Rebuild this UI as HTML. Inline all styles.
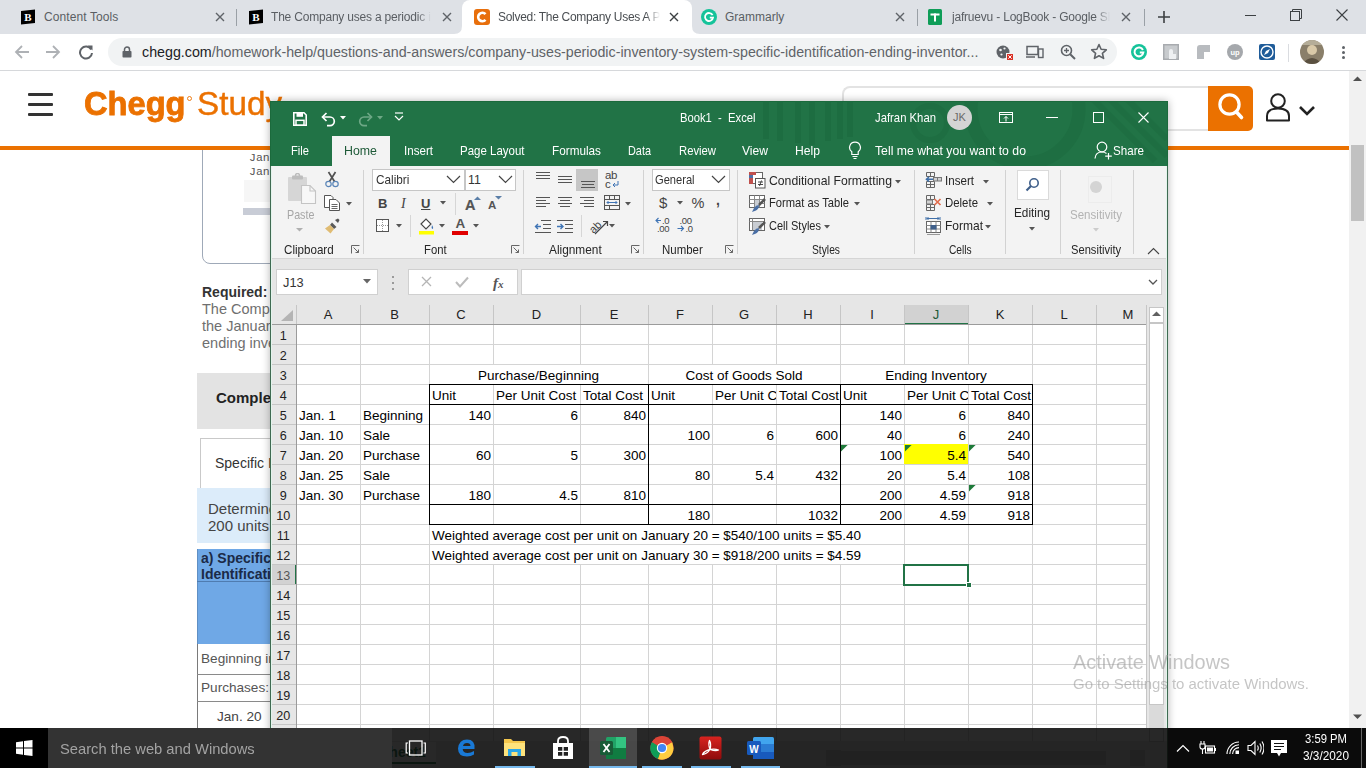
<!DOCTYPE html><html><head><meta charset="utf-8"><style>
html,body{margin:0;padding:0}
body{width:1366px;height:768px;overflow:hidden;position:relative;font-family:"Liberation Sans",sans-serif;background:#fff}
div,svg{box-sizing:border-box}
</style></head><body>
<div style="position:absolute;left:0px;top:0px;width:1366px;height:34px;background:#dee1e6"></div>
<div style="position:absolute;left:462px;top:0;width:230px;height:34px;background:#fff;border-radius:8px 8px 0 0"></div>
<svg style="position:absolute;left:454px;top:26px;" width="8" height="8" viewBox="0 0 8 8"><path d="M0 8 Q8 8 8 0 L8 8 Z" fill="#fff"/></svg>
<svg style="position:absolute;left:692px;top:26px;" width="8" height="8" viewBox="0 0 8 8"><path d="M8 8 Q0 8 0 0 L0 8 Z" fill="#fff"/></svg>
<div style="position:absolute;left:236px;top:9px;width:1px;height:17px;background:#9aa0a6"></div>
<div style="position:absolute;left:917px;top:9px;width:1px;height:17px;background:#9aa0a6"></div>
<div style="position:absolute;left:1144px;top:9px;width:1px;height:17px;background:#9aa0a6"></div>
<svg style="position:absolute;left:20px;top:9px;" width="16" height="16" viewBox="0 0 16 16"><path d="M1 2 L15 0.5 L15 14 L1 15.5 Z" fill="#000"/><text x="8" y="12.3" font-family="Liberation Serif" font-weight="bold" font-size="11" fill="#fff" text-anchor="middle">B</text></svg>
<div style="position:absolute;left:44px;top:9.0px;height:16px;line-height:16px;font-size:12px;color:#5a5e63;white-space:nowrap;letter-spacing:0.1px">Content Tools</div>
<svg style="position:absolute;left:215px;top:12px;" width="10" height="10" viewBox="0 0 10 10"><path d="M1 1 L9 9 M9 1 L1 9" stroke="#5f6368" stroke-width="1.4"/></svg>
<svg style="position:absolute;left:248px;top:9px;" width="16" height="16" viewBox="0 0 16 16"><path d="M1 2 L15 0.5 L15 14 L1 15.5 Z" fill="#000"/><text x="8" y="12.3" font-family="Liberation Serif" font-weight="bold" font-size="11" fill="#fff" text-anchor="middle">B</text></svg>
<div style="position:absolute;left:271px;top:9px;width:160px;height:16px;line-height:16px;font-size:12px;color:#5a5e63;letter-spacing:-0.2px;white-space:nowrap;overflow:hidden;-webkit-mask-image:linear-gradient(90deg,#000 calc(100% - 14px),transparent)">The Company uses a periodic inventory</div>
<svg style="position:absolute;left:442px;top:12px;" width="10" height="10" viewBox="0 0 10 10"><path d="M1 1 L9 9 M9 1 L1 9" stroke="#5f6368" stroke-width="1.4"/></svg>
<svg style="position:absolute;left:474px;top:9px;" width="16" height="16" viewBox="0 0 16 16"><rect x="0" y="0" width="16" height="16" rx="3" fill="#e86f0c"/><path d="M11.5 5.2 A4.2 4.2 0 1 0 11.5 10.8" stroke="#fff" stroke-width="2.6" fill="none"/></svg>
<div style="position:absolute;left:498px;top:9px;width:162px;height:16px;line-height:16px;font-size:12px;color:#4a4e52;letter-spacing:-0.3px;white-space:nowrap;overflow:hidden;-webkit-mask-image:linear-gradient(90deg,#000 calc(100% - 14px),transparent)">Solved: The Company Uses A Periodic</div>
<svg style="position:absolute;left:669px;top:12px;" width="10" height="10" viewBox="0 0 10 10"><path d="M1 1 L9 9 M9 1 L1 9" stroke="#3c4043" stroke-width="1.4"/></svg>
<svg style="position:absolute;left:701px;top:9px;" width="16" height="16" viewBox="0 0 16 16"><circle cx="8" cy="8" r="8" fill="#15c39a"/><path d="M11.6 6.2 A4 4 0 1 0 12 8.6 L8.8 8.6" stroke="#fff" stroke-width="1.8" fill="none"/></svg>
<div style="position:absolute;left:725px;top:9.0px;height:16px;line-height:16px;font-size:12px;color:#5a5e63;white-space:nowrap;">Grammarly</div>
<svg style="position:absolute;left:895px;top:12px;" width="10" height="10" viewBox="0 0 10 10"><path d="M1 1 L9 9 M9 1 L1 9" stroke="#5f6368" stroke-width="1.4"/></svg>
<svg style="position:absolute;left:927px;top:9px;" width="16" height="16" viewBox="0 0 16 16"><rect x="1" y="0" width="14" height="16" rx="1.5" fill="#0f9d58"/><rect x="3.5" y="4.5" width="9" height="2" fill="#fff"/><rect x="7" y="4.5" width="2" height="8" fill="#fff"/></svg>
<div style="position:absolute;left:952px;top:9px;width:158px;height:16px;line-height:16px;font-size:12px;color:#5a5e63;letter-spacing:-0.2px;white-space:nowrap;overflow:hidden;-webkit-mask-image:linear-gradient(90deg,#000 calc(100% - 14px),transparent)">jafruevu - LogBook - Google Sheets</div>
<svg style="position:absolute;left:1121px;top:12px;" width="10" height="10" viewBox="0 0 10 10"><path d="M1 1 L9 9 M9 1 L1 9" stroke="#5f6368" stroke-width="1.4"/></svg>
<svg style="position:absolute;left:1157px;top:10px;" width="14" height="14" viewBox="0 0 14 14"><path d="M7 1 V13 M1 7 H13" stroke="#3c4043" stroke-width="1.6"/></svg>
<div style="position:absolute;left:1245px;top:15px;width:11px;height:1px;background:#3c4043"></div>
<svg style="position:absolute;left:1290px;top:9px;" width="12" height="12" viewBox="0 0 12 12"><rect x="0.5" y="2.5" width="9" height="9" fill="none" stroke="#3c4043"/><path d="M2.5 2.5 V0.5 H11.5 V9.5 H9.5" fill="none" stroke="#3c4043"/></svg>
<svg style="position:absolute;left:1336px;top:9px;" width="12" height="12" viewBox="0 0 12 12"><path d="M0.5 0.5 L11.5 11.5 M11.5 0.5 L0.5 11.5" stroke="#3c4043" stroke-width="1.1"/></svg>
<div style="position:absolute;left:0px;top:34px;width:1366px;height:36px;background:#fff"></div>
<div style="position:absolute;left:0px;top:70px;width:1366px;height:1px;background:#d6d8db"></div>
<svg style="position:absolute;left:14px;top:44px;" width="16" height="16" viewBox="0 0 16 16"><path d="M15 8 H2 M8 2 L2 8 L8 14" stroke="#aeb1b5" stroke-width="1.8" fill="none"/></svg>
<svg style="position:absolute;left:45px;top:44px;" width="16" height="16" viewBox="0 0 16 16"><path d="M1 8 H14 M8 2 L14 8 L8 14" stroke="#aeb1b5" stroke-width="1.8" fill="none"/></svg>
<svg style="position:absolute;left:78px;top:44px;" width="16" height="16" viewBox="0 0 16 16"><path d="M13.2 5.5 A6 6 0 1 0 14 9" stroke="#5f6368" stroke-width="2" fill="none"/><path d="M9.5 1.5 L14.5 1.5 L14.5 6.5 Z" fill="#5f6368"/></svg>
<div style="position:absolute;left:108px;top:38px;width:1009px;height:28px;background:#f1f3f4;border-radius:14px"></div>
<svg style="position:absolute;left:121.5px;top:46px;" width="10" height="12" viewBox="0 0 10 12"><rect x="0.5" y="5" width="9" height="6.5" rx="0.8" fill="#5f6368"/><path d="M2.5 5.5 V3.6 A2.5 2.5 0 0 1 7.5 3.6 V5.5" stroke="#5f6368" stroke-width="1.5" fill="none"/></svg>
<div style="position:absolute;left:142px;top:42.875px;height:18.25px;line-height:18.25px;font-size:14.25px;color:#5f6368;white-space:nowrap;"><span style="color:#202124">chegg.com</span><span style="color:#5f6368">/homework-help/questions-and-answers/company-uses-periodic-inventory-system-specific-identification-ending-inventor...</span></div>
<svg style="position:absolute;left:996px;top:44px;" width="18" height="16" viewBox="0 0 18 16"><circle cx="7" cy="8" r="6.5" fill="#5f6368"/><circle cx="4.5" cy="6" r="1.3" fill="#f1f3f4"/><circle cx="8.5" cy="4.5" r="1.1" fill="#f1f3f4"/><circle cx="5.5" cy="10.5" r="1.1" fill="#f1f3f4"/><rect x="10" y="9" width="7" height="7" fill="#f1f3f4"/><rect x="11" y="10" width="6" height="6" fill="#d93025"/><path d="M12.3 11.3 L15.7 14.7 M15.7 11.3 L12.3 14.7" stroke="#fff" stroke-width="1"/></svg>
<svg style="position:absolute;left:1026px;top:45px;" width="18" height="14" viewBox="0 0 18 14"><rect x="1" y="1.5" width="11" height="8" fill="none" stroke="#5f6368" stroke-width="1.5"/><path d="M0 12 H9" stroke="#5f6368" stroke-width="1.5"/><rect x="12.5" y="4" width="4.5" height="8.5" fill="none" stroke="#5f6368" stroke-width="1.4"/></svg>
<svg style="position:absolute;left:1060px;top:44px;" width="16" height="16" viewBox="0 0 16 16"><circle cx="6.5" cy="6.5" r="5" fill="none" stroke="#5f6368" stroke-width="1.6"/><path d="M10.2 10.2 L15 15" stroke="#5f6368" stroke-width="2"/><path d="M6.5 4 V9 M4 6.5 H9" stroke="#5f6368" stroke-width="1.3"/></svg>
<svg style="position:absolute;left:1090px;top:43px;" width="18" height="17" viewBox="0 0 18 17"><path d="M9 1.5 L11.1 6.3 L16.3 6.8 L12.4 10.3 L13.6 15.4 L9 12.7 L4.4 15.4 L5.6 10.3 L1.7 6.8 L6.9 6.3 Z" fill="none" stroke="#5f6368" stroke-width="1.6" stroke-linejoin="round"/></svg>
<svg style="position:absolute;left:1130px;top:43px;" width="18" height="18" viewBox="0 0 18 18"><circle cx="9" cy="9" r="8" fill="#15c39a"/><path d="M12.9 7 A4.4 4.4 0 1 0 13.3 9.6 L9.8 9.6" stroke="#fff" stroke-width="2" fill="none"/></svg>
<svg style="position:absolute;left:1162px;top:43px;" width="18" height="18" viewBox="0 0 18 18"><rect x="1" y="1" width="16" height="16" fill="#a8abaf"/><rect x="2.5" y="2.5" width="13" height="13" fill="#c8cbce"/><path d="M7 16 V8 Q7 6 9 6 Q11 6 11 8 V11 H14 V16 Z" fill="#eef0f2"/></svg>
<svg style="position:absolute;left:1195px;top:44px;" width="17" height="17" viewBox="0 0 17 17"><path d="M2 4 Q2 1 5 1 H15 V8 H9 V15 H2 Z" fill="#b8bbbf"/></svg>
<svg style="position:absolute;left:1226px;top:43px;" width="18" height="18" viewBox="0 0 18 18"><circle cx="9" cy="9" r="8" fill="#a5a8ac"/><text x="9" y="12" font-size="7.5" font-weight="bold" fill="#fff" text-anchor="middle" font-family="Liberation Sans">up</text></svg>
<svg style="position:absolute;left:1258px;top:43px;" width="18" height="18" viewBox="0 0 18 18"><rect x="1" y="1" width="16" height="16" rx="2" fill="#1f5c99"/><circle cx="9" cy="9" r="6" fill="none" stroke="#fff" stroke-width="1.4"/><path d="M12 6 L10 10 L6 12 L8 8 Z" fill="#fff"/></svg>
<div style="position:absolute;left:1288px;top:44px;width:1px;height:18px;background:#dadce0"></div>
<svg style="position:absolute;left:1300px;top:40px;" width="24" height="24" viewBox="0 0 24 24"><defs><clipPath id="pc"><circle cx="12" cy="12" r="12"/></clipPath></defs><g clip-path="url(#pc)"><rect width="24" height="24" fill="#8a7f6a"/><circle cx="12" cy="10" r="5" fill="#d9c9a8"/><path d="M2 24 Q12 12 22 24 Z" fill="#5a5040"/><rect x="0" y="0" width="24" height="5" fill="#b5ad98"/></g></svg>
<div style="position:absolute;left:1342px;top:46px;width:3px;height:3px;border-radius:2px;background:#5f6368"></div>
<div style="position:absolute;left:1342px;top:51px;width:3px;height:3px;border-radius:2px;background:#5f6368"></div>
<div style="position:absolute;left:1342px;top:56px;width:3px;height:3px;border-radius:2px;background:#5f6368"></div>
<div style="position:absolute;left:0px;top:71px;width:1349px;height:657px;background:#fff"></div>
<div style="position:absolute;left:1349px;top:71px;width:17px;height:657px;background:#f1f1f1"></div>
<div style="position:absolute;left:1351px;top:145px;width:13px;height:76px;background:#c1c1c1"></div>
<svg style="position:absolute;left:1353px;top:76px;" width="9" height="6" viewBox="0 0 9 6"><path d="M0 5 L4.5 0.5 L9 5 Z" fill="#505050"/></svg>
<svg style="position:absolute;left:1353px;top:714px;" width="9" height="6" viewBox="0 0 9 6"><path d="M0 0.5 L4.5 5 L9 0.5 Z" fill="#505050"/></svg>
<div style="position:absolute;left:202px;top:120px;width:300px;height:144px;border:1px solid #9fa9b8;border-radius:8px;background:#fff"></div>
<div style="position:absolute;left:249px;top:150.25px;height:15.5px;line-height:15.5px;font-size:11.5px;color:#555;white-space:nowrap;font-family:'Liberation Mono',monospace">Jan</div>
<div style="position:absolute;left:249px;top:164.25px;height:15.5px;line-height:15.5px;font-size:11.5px;color:#555;white-space:nowrap;font-family:'Liberation Mono',monospace">Jan</div>
<div style="position:absolute;left:244px;top:180px;width:30px;height:22px;background:#f6f6f6"></div>
<div style="position:absolute;left:243px;top:208px;width:30px;height:7px;background:#c8ccd6"></div>
<div style="position:absolute;left:202px;top:283.0px;height:18px;line-height:18px;font-size:14px;color:#333;white-space:nowrap;font-weight:bold">Required:</div>
<div style="position:absolute;left:202px;top:299.75px;height:18.5px;line-height:18.5px;font-size:14.5px;color:#6f6f6f;white-space:nowrap;">The Company uses</div>
<div style="position:absolute;left:202px;top:316.75px;height:18.5px;line-height:18.5px;font-size:14.5px;color:#6f6f6f;white-space:nowrap;">the January 30</div>
<div style="position:absolute;left:202px;top:333.75px;height:18.5px;line-height:18.5px;font-size:14.5px;color:#6f6f6f;white-space:nowrap;">ending inventory</div>
<div style="position:absolute;left:197px;top:373px;width:200px;height:56px;background:#e3e3e3"></div>
<div style="position:absolute;left:216px;top:387.5px;height:19px;line-height:19px;font-size:15px;color:#222;white-space:nowrap;font-weight:bold">Complete</div>
<div style="position:absolute;left:200px;top:438px;width:200px;height:52px;border:1px solid #c9c9c9;border-bottom:none;background:#fff"></div>
<div style="position:absolute;left:215px;top:454.0px;height:18px;line-height:18px;font-size:14px;color:#333;white-space:nowrap;">Specific Identification</div>
<div style="position:absolute;left:197px;top:488px;width:200px;height:55px;background:#dcecfa"></div>
<div style="position:absolute;left:208px;top:498.5px;height:19px;line-height:19px;font-size:15px;color:#444;white-space:nowrap;">Determine</div>
<div style="position:absolute;left:208px;top:515.5px;height:19px;line-height:19px;font-size:15px;color:#444;white-space:nowrap;">200 units</div>
<div style="position:absolute;left:197px;top:549px;width:200px;height:95px;background:#6fa8e6;border-left:1px solid #5f8fc4"></div>
<div style="position:absolute;left:197px;top:581px;width:200px;height:1px;background:#4f7cb0"></div>
<div style="position:absolute;left:201px;top:549.0px;height:18px;line-height:18px;font-size:14px;color:#1b2a47;white-space:nowrap;font-weight:bold">a) Specific</div>
<div style="position:absolute;left:201px;top:565.0px;height:18px;line-height:18px;font-size:14px;color:#1b2a47;white-space:nowrap;font-weight:bold">Identification</div>
<div style="position:absolute;left:197px;top:644px;width:200px;height:100px;border-left:1px solid #7a7a7a;background:#fff"></div>
<div style="position:absolute;left:197px;top:674px;width:200px;height:1px;background:#8a8a8a"></div>
<div style="position:absolute;left:197px;top:701px;width:200px;height:1px;background:#8a8a8a"></div>
<div style="position:absolute;left:201px;top:650.2px;height:17.6px;line-height:17.6px;font-size:13.6px;color:#555;white-space:nowrap;">Beginning inventory</div>
<div style="position:absolute;left:201px;top:679.2px;height:17.6px;line-height:17.6px;font-size:13.6px;color:#555;white-space:nowrap;">Purchases:</div>
<div style="position:absolute;left:217px;top:708.2px;height:17.6px;line-height:17.6px;font-size:13.6px;color:#444;white-space:nowrap;">Jan. 20</div>
<div style="position:absolute;left:0px;top:71px;width:1349px;height:75px;background:#fff"></div>
<div style="position:absolute;left:28px;top:93px;width:25px;height:3px;background:#333;border-radius:1px"></div>
<div style="position:absolute;left:28px;top:103px;width:25px;height:3px;background:#333;border-radius:1px"></div>
<div style="position:absolute;left:28px;top:113px;width:25px;height:3px;background:#333;border-radius:1px"></div>
<div style="position:absolute;left:84px;top:84.0px;height:40px;line-height:40px;font-size:32.5px;color:#eb7100;white-space:nowrap;transform:scaleX(1.0039);transform-origin:0 50%;font-weight:bold;-webkit-text-stroke:0.8px #eb7100">Chegg</div>
<svg style="position:absolute;left:187px;top:96px;" width="5" height="5" viewBox="0 0 5 5"><circle cx="2.5" cy="2.5" r="2" fill="none" stroke="#eb7100" stroke-width="0.9"/></svg>
<div style="position:absolute;left:196.5px;top:84.0px;height:40px;line-height:40px;font-size:32.5px;color:#eb7100;white-space:nowrap;transform:scaleX(1.0228);transform-origin:0 50%;-webkit-text-stroke:0.4px #eb7100">Study</div>
<div style="position:absolute;left:842px;top:86px;width:380px;height:45px;border:2px solid #e3e3e3;border-right:none;border-radius:8px 0 0 8px;background:#fff"></div>
<div style="position:absolute;left:1208px;top:86px;width:45px;height:45px;background:#eb7100;border-radius:0 5px 5px 0"></div>
<svg style="position:absolute;left:1214px;top:89px;" width="32" height="32" viewBox="0 0 32 32"><circle cx="15.5" cy="15.5" r="9.6" fill="none" stroke="#fff" stroke-width="3.2"/><path d="M22.5 23 L27.5 28.5" stroke="#fff" stroke-width="3.6" stroke-linecap="round"/></svg>
<svg style="position:absolute;left:1265px;top:93px;" width="26" height="29" viewBox="0 0 26 29"><circle cx="13" cy="8" r="6.8" fill="none" stroke="#222" stroke-width="2"/><path d="M2 27.5 V23 Q2 15.5 13 15.5 Q24 15.5 24 23 V27.5 Z" fill="none" stroke="#222" stroke-width="2" stroke-linejoin="round"/></svg>
<svg style="position:absolute;left:1298px;top:105px;" width="18" height="12" viewBox="0 0 18 12"><path d="M2 2 L9 9 L16 2" fill="none" stroke="#222" stroke-width="2.6"/></svg>
<div style="position:absolute;left:0px;top:146px;width:1349px;height:4px;background:#eb7100"></div>
<div style="position:absolute;left:270px;top:101px;width:898px;height:667px;background:#e6e6e6;box-shadow:0 0 8px rgba(0,0,0,0.3);border:1px solid #3f6a52;border-bottom:none"></div>
<div style="position:absolute;left:270px;top:101px;width:898px;height:65px;background:#217346;border:1px solid #1b6a3c;border-bottom:none"></div>
<svg style="position:absolute;left:700px;top:101px;" width="467" height="65" viewBox="0 0 467 65"><g fill="none" stroke="#1d6b3f"><path d="M66 0 V38 M80 0 V40 M98 0 V42 M112 0 V44 M128 0 V40 M140 0 V38 M150 0 V36" stroke-width="6" opacity="0.7"/><circle cx="325" cy="8" r="54" stroke-width="13" opacity="0.6"/><circle cx="230" cy="22" r="17" stroke-width="6" opacity="0.6"/><path d="M385 -10 L455 60 M402 -10 L467 55 M419 -10 L467 38" stroke-width="6" opacity="0.6"/></g></svg>
<svg style="position:absolute;left:293px;top:112px;" width="14" height="14" viewBox="0 0 14 14"><path d="M0.8 0.8 H11 L13.2 3 V13.2 H0.8 Z" fill="none" stroke="#fff" stroke-width="1.6"/><rect x="3.5" y="1" width="6.5" height="3.8" fill="#fff"/><rect x="3" y="8.3" width="8" height="5" fill="none" stroke="#fff" stroke-width="1.5"/></svg>
<svg style="position:absolute;left:321px;top:111px;" width="16" height="16" viewBox="0 0 16 16"><path d="M2 6 H9 A4.3 4.3 0 0 1 9 14.6 H6" fill="none" stroke="#fff" stroke-width="1.7"/><path d="M5.5 2 L1.5 6 L5.5 10" fill="none" stroke="#fff" stroke-width="1.7"/></svg>
<svg style="position:absolute;left:340px;top:116px;" width="6" height="4" viewBox="0 0 6 4"><path d="M0 0 H6 L3 3.5 Z" fill="#fff"/></svg>
<svg style="position:absolute;left:357px;top:111px;" width="16" height="16" viewBox="0 0 16 16"><path d="M14 6 H7 A4.3 4.3 0 0 0 7 14.6 H10" fill="none" stroke="#6ea886" stroke-width="1.7"/><path d="M10.5 2 L14.5 6 L10.5 10" fill="none" stroke="#6ea886" stroke-width="1.7"/></svg>
<svg style="position:absolute;left:377px;top:116px;" width="6" height="4" viewBox="0 0 6 4"><path d="M0 0 H6 L3 3.5 Z" fill="#6ea886"/></svg>
<svg style="position:absolute;left:394px;top:112px;" width="10" height="10" viewBox="0 0 10 10"><path d="M1 1 H9" stroke="#fff" stroke-width="1.2"/><path d="M1 4 L5 8 L9 4" fill="none" stroke="#fff" stroke-width="1.2"/></svg>
<div style="position:absolute;left:680px;top:110.2px;height:16.6px;line-height:16.6px;font-size:12.6px;color:#fff;white-space:nowrap;transform:scaleX(0.8922);transform-origin:0 50%;">Book1&nbsp; -&nbsp; Excel</div>
<div style="position:absolute;left:875px;top:109.7px;height:16.6px;line-height:16.6px;font-size:12.6px;color:#fff;white-space:nowrap;transform:scaleX(0.8977);transform-origin:0 50%;">Jafran Khan</div>
<div style="position:absolute;left:947px;top:105px;width:25px;height:25px;border-radius:13px;background:#d4d4d4;color:#6a6a6a;font-size:11px;line-height:25px;text-align:center">JK</div>
<svg style="position:absolute;left:999px;top:112px;" width="14" height="11" viewBox="0 0 14 11"><rect x="0.5" y="0.5" width="13" height="10" fill="none" stroke="#fff" stroke-width="1"/><path d="M0.5 2.5 H13.5" stroke="#fff" stroke-width="1"/><path d="M7 9.5 V4.5 M5 6.5 L7 4.5 L9 6.5" fill="none" stroke="#fff" stroke-width="1"/></svg>
<div style="position:absolute;left:1046px;top:117px;width:12px;height:1px;background:#fff"></div>
<div style="position:absolute;left:1093px;top:112px;width:11px;height:11px;border:1px solid #fff"></div>
<svg style="position:absolute;left:1138px;top:111.5px;" width="11" height="11" viewBox="0 0 11 11"><path d="M0.5 0.5 L10.5 10.5 M10.5 0.5 L0.5 10.5" stroke="#fff" stroke-width="1.1"/></svg>
<div style="position:absolute;left:332px;top:136px;width:58px;height:30px;background:#f3f3f3"></div>
<div style="position:absolute;left:291px;top:142.7px;height:16.6px;line-height:16.6px;font-size:12.6px;color:#fff;white-space:nowrap;transform:scaleX(0.8865);transform-origin:0 50%;">File</div>
<div style="position:absolute;left:404px;top:142.7px;height:16.6px;line-height:16.6px;font-size:12.6px;color:#fff;white-space:nowrap;transform:scaleX(0.9203);transform-origin:0 50%;">Insert</div>
<div style="position:absolute;left:460px;top:142.7px;height:16.6px;line-height:16.6px;font-size:12.6px;color:#fff;white-space:nowrap;transform:scaleX(0.9129);transform-origin:0 50%;">Page Layout</div>
<div style="position:absolute;left:552px;top:142.7px;height:16.6px;line-height:16.6px;font-size:12.6px;color:#fff;white-space:nowrap;transform:scaleX(0.9331);transform-origin:0 50%;">Formulas</div>
<div style="position:absolute;left:628px;top:142.7px;height:16.6px;line-height:16.6px;font-size:12.6px;color:#fff;white-space:nowrap;transform:scaleX(0.8642);transform-origin:0 50%;">Data</div>
<div style="position:absolute;left:679px;top:142.7px;height:16.6px;line-height:16.6px;font-size:12.6px;color:#fff;white-space:nowrap;transform:scaleX(0.8956);transform-origin:0 50%;">Review</div>
<div style="position:absolute;left:742px;top:142.7px;height:16.6px;line-height:16.6px;font-size:12.6px;color:#fff;white-space:nowrap;transform:scaleX(0.9600);transform-origin:0 50%;">View</div>
<div style="position:absolute;left:795px;top:142.7px;height:16.6px;line-height:16.6px;font-size:12.6px;color:#fff;white-space:nowrap;transform:scaleX(0.9647);transform-origin:0 50%;">Help</div>
<div style="position:absolute;left:344px;top:142.7px;height:16.6px;line-height:16.6px;font-size:12.6px;color:#1e5a38;white-space:nowrap;transform:scaleX(0.9818);transform-origin:0 50%;">Home</div>
<svg style="position:absolute;left:848px;top:141px;" width="14" height="19" viewBox="0 0 14 19"><path d="M7 1.2 A5.3 5.3 0 0 0 3.8 10.8 V13.5 H10.2 V10.8 A5.3 5.3 0 0 0 7 1.2 Z" fill="none" stroke="#fff" stroke-width="1.2"/><path d="M4.5 15.5 H9.5 M5.5 17.5 H8.5" stroke="#fff" stroke-width="1.2"/></svg>
<div style="position:absolute;left:875px;top:142.7px;height:16.6px;line-height:16.6px;font-size:12.6px;color:#fff;white-space:nowrap;transform:scaleX(0.9712);transform-origin:0 50%;">Tell me what you want to do</div>
<svg style="position:absolute;left:1094px;top:141px;" width="19" height="19" viewBox="0 0 19 19"><circle cx="8" cy="6" r="4.8" fill="none" stroke="#fff" stroke-width="1.2"/><path d="M1 17.5 Q1.5 11 8 11 Q11 11 12.5 12.5" fill="none" stroke="#fff" stroke-width="1.2"/><path d="M14.5 12 V18.5 M11.2 15.2 H17.8" stroke="#fff" stroke-width="1.2"/></svg>
<div style="position:absolute;left:1113px;top:142.7px;height:16.6px;line-height:16.6px;font-size:12.6px;color:#fff;white-space:nowrap;transform:scaleX(0.9220);transform-origin:0 50%;">Share</div>
<div style="position:absolute;left:271px;top:166px;width:896px;height:92px;background:#f3f3f3"></div>
<div style="position:absolute;left:271px;top:258px;width:896px;height:1px;background:#d5d5d5"></div>
<div style="position:absolute;left:363px;top:170px;width:1px;height:84px;background:#d2d2d2"></div>
<div style="position:absolute;left:523px;top:170px;width:1px;height:84px;background:#d2d2d2"></div>
<div style="position:absolute;left:643px;top:170px;width:1px;height:84px;background:#d2d2d2"></div>
<div style="position:absolute;left:737px;top:170px;width:1px;height:84px;background:#d2d2d2"></div>
<div style="position:absolute;left:914px;top:170px;width:1px;height:84px;background:#d2d2d2"></div>
<div style="position:absolute;left:1005px;top:170px;width:1px;height:84px;background:#d2d2d2"></div>
<div style="position:absolute;left:1060px;top:170px;width:1px;height:84px;background:#d2d2d2"></div>
<div style="position:absolute;left:1133px;top:170px;width:1px;height:84px;background:#d2d2d2"></div>
<div style="position:absolute;left:284px;top:241.7px;height:16.6px;line-height:16.6px;font-size:12.6px;color:#262626;white-space:nowrap;transform:scaleX(0.9215);transform-origin:0 50%;">Clipboard</div>
<div style="position:absolute;left:424px;top:241.7px;height:16.6px;line-height:16.6px;font-size:12.6px;color:#262626;white-space:nowrap;transform:scaleX(0.8964);transform-origin:0 50%;">Font</div>
<div style="position:absolute;left:549px;top:241.7px;height:16.6px;line-height:16.6px;font-size:12.6px;color:#262626;white-space:nowrap;transform:scaleX(0.9405);transform-origin:0 50%;">Alignment</div>
<div style="position:absolute;left:662px;top:241.7px;height:16.6px;line-height:16.6px;font-size:12.6px;color:#262626;white-space:nowrap;transform:scaleX(0.9104);transform-origin:0 50%;">Number</div>
<div style="position:absolute;left:811.5px;top:241.7px;height:16.6px;line-height:16.6px;font-size:12.6px;color:#262626;white-space:nowrap;transform:scaleX(0.8160);transform-origin:0 50%;">Styles</div>
<div style="position:absolute;left:948.6px;top:241.7px;height:16.6px;line-height:16.6px;font-size:12.6px;color:#262626;white-space:nowrap;transform:scaleX(0.8105);transform-origin:0 50%;">Cells</div>
<div style="position:absolute;left:1071.4px;top:241.7px;height:16.6px;line-height:16.6px;font-size:12.6px;color:#262626;white-space:nowrap;transform:scaleX(0.8851);transform-origin:0 50%;">Sensitivity</div>
<svg style="position:absolute;left:351px;top:245px;" width="9" height="9" viewBox="0 0 9 9"><path d="M0.5 8.5 V0.5 H8.5" fill="none" stroke="#666" stroke-width="1"/><path d="M2.5 2.5 L7.5 7.5 M4.5 7.5 H7.5 V4.5" fill="none" stroke="#666" stroke-width="1"/></svg>
<svg style="position:absolute;left:511px;top:245px;" width="9" height="9" viewBox="0 0 9 9"><path d="M0.5 8.5 V0.5 H8.5" fill="none" stroke="#666" stroke-width="1"/><path d="M2.5 2.5 L7.5 7.5 M4.5 7.5 H7.5 V4.5" fill="none" stroke="#666" stroke-width="1"/></svg>
<svg style="position:absolute;left:631px;top:245px;" width="9" height="9" viewBox="0 0 9 9"><path d="M0.5 8.5 V0.5 H8.5" fill="none" stroke="#666" stroke-width="1"/><path d="M2.5 2.5 L7.5 7.5 M4.5 7.5 H7.5 V4.5" fill="none" stroke="#666" stroke-width="1"/></svg>
<svg style="position:absolute;left:725px;top:245px;" width="9" height="9" viewBox="0 0 9 9"><path d="M0.5 8.5 V0.5 H8.5" fill="none" stroke="#666" stroke-width="1"/><path d="M2.5 2.5 L7.5 7.5 M4.5 7.5 H7.5 V4.5" fill="none" stroke="#666" stroke-width="1"/></svg>
<svg style="position:absolute;left:1147px;top:247px;" width="13" height="8" viewBox="0 0 13 8"><path d="M1 7 L6.5 1.5 L12 7" fill="none" stroke="#444" stroke-width="1.1"/></svg>
<svg style="position:absolute;left:287px;top:173px;" width="30" height="31" viewBox="0 0 30 31"><rect x="1" y="4" width="19" height="24" rx="1" fill="#d6d6d6"/><rect x="5" y="2.5" width="11" height="4" rx="1" fill="#bdbdbd"/><circle cx="10.5" cy="2.5" r="2" fill="none" stroke="#bdbdbd" stroke-width="1.5"/><path d="M14.5 12.5 H23 L28.5 18 V30.5 H14.5 Z" fill="#f7f7f7" stroke="#c4c4c4" stroke-width="1.1"/><path d="M23 12.5 V18 H28.5" fill="none" stroke="#c4c4c4" stroke-width="1.1"/></svg>
<div style="position:absolute;left:286.6px;top:206.7px;height:16.6px;line-height:16.6px;font-size:12.6px;color:#a6a6a6;white-space:nowrap;transform:scaleX(0.8504);transform-origin:0 50%;">Paste</div>
<svg style="position:absolute;left:296px;top:228px;" width="7" height="4" viewBox="0 0 7 4"><path d="M0 0 H7 L3.5 3.5 Z" fill="#b0b0b0"/></svg>
<svg style="position:absolute;left:324px;top:171px;" width="16" height="17" viewBox="0 0 16 17"><path d="M4.5 1 L10.5 10.5 M11.5 1 L5.5 10.5" stroke="#505050" stroke-width="1.7"/><circle cx="4.5" cy="13" r="2.7" fill="none" stroke="#5b86b8" stroke-width="1.2"/><circle cx="11.5" cy="13" r="2.7" fill="none" stroke="#5b86b8" stroke-width="1.2"/></svg>
<svg style="position:absolute;left:324px;top:195px;" width="16" height="16" viewBox="0 0 16 16"><path d="M0.5 0.5 H7 L9 2.5 V12.5 H0.5 Z" fill="#fff" stroke="#555" stroke-width="1"/><path d="M5.5 4.5 H12 L15.5 8 V15.5 H5.5 Z" fill="#fff" stroke="#555" stroke-width="1"/><path d="M7.5 9.5 H13.5 M7.5 11.5 H13.5 M7.5 13.5 H13.5" stroke="#555" stroke-width="0.9"/></svg>
<svg style="position:absolute;left:346px;top:202px;" width="6" height="4" viewBox="0 0 6 4"><path d="M0 0 H6 L3 3.5 Z" fill="#555"/></svg>
<svg style="position:absolute;left:324px;top:218px;" width="17" height="16" viewBox="0 0 17 16"><path d="M11 2 L14 0.5 L15.5 2 L14 5 Z" fill="#555"/><path d="M8 4.5 L12.5 9 L10 11 L6 7 Z" fill="#5a5a5a"/><path d="M6 7 L10 11 L6.5 15.5 L1 10.5 Z" fill="#e0bc73"/></svg>
<div style="position:absolute;left:372px;top:169px;width:93px;height:22px;background:#fff;border:1px solid #c6c6c6"></div>
<div style="position:absolute;left:465px;top:169px;width:51px;height:22px;background:#fff;border:1px solid #c6c6c6"></div>
<div style="position:absolute;left:375.6px;top:172.2px;height:16.6px;line-height:16.6px;font-size:12.6px;color:#333;white-space:nowrap;transform:scaleX(0.9353);transform-origin:0 50%;">Calibri</div>
<div style="position:absolute;left:468px;top:172.35px;height:16.3px;line-height:16.3px;font-size:12.3px;color:#333;white-space:nowrap;">11</div>
<svg style="position:absolute;left:446px;top:175px;" width="15" height="9" viewBox="0 0 15 9"><path d="M1 1 L7.5 7.5 L14 1" fill="none" stroke="#444" stroke-width="1.2"/></svg>
<svg style="position:absolute;left:498px;top:175px;" width="15" height="9" viewBox="0 0 15 9"><path d="M1 1 L7.5 7.5 L14 1" fill="none" stroke="#444" stroke-width="1.2"/></svg>
<div style="position:absolute;left:378px;top:194.5px;height:17px;line-height:17px;font-size:13px;color:#444;white-space:nowrap;"><b>B</b></div>
<div style="position:absolute;left:401px;top:194.0px;height:18px;line-height:18px;font-size:14px;color:#444;white-space:nowrap;"><i style='font-family:Liberation Serif'>I</i></div>
<div style="position:absolute;left:421px;top:194.5px;height:17px;line-height:17px;font-size:13px;color:#444;white-space:nowrap;font-weight:bold"><u>U</u></div>
<svg style="position:absolute;left:440px;top:201px;" width="6" height="4" viewBox="0 0 6 4"><path d="M0 0 H6 L3 3.5 Z" fill="#555"/></svg>
<div style="position:absolute;left:455px;top:193px;width:1px;height:22px;background:#d6d6d6"></div>
<div style="position:absolute;left:465px;top:195.75px;height:18.5px;line-height:18.5px;font-size:14.5px;color:#555;white-space:nowrap;font-weight:bold;-webkit-text-stroke:0.2px #555">A</div>
<svg style="position:absolute;left:474px;top:195.5px;" width="7" height="4" viewBox="0 0 7 4"><path d="M0 4 L3.5 0.5 L7 4 Z" fill="#5b7fa8"/></svg>
<div style="position:absolute;left:488px;top:198.25px;height:15.5px;line-height:15.5px;font-size:11.5px;color:#555;white-space:nowrap;font-weight:bold">A</div>
<svg style="position:absolute;left:494.5px;top:195.5px;" width="7" height="4" viewBox="0 0 7 4"><path d="M0 0 H7 L3.5 3.5 Z" fill="#5b7fa8"/></svg>
<svg style="position:absolute;left:376px;top:219px;" width="13" height="13" viewBox="0 0 13 13"><rect x="0.5" y="0.5" width="12" height="12" fill="#fff" stroke="#555"/><path d="M6.5 1 V12 M1 6.5 H12" stroke="#999" stroke-dasharray="1 1"/></svg>
<svg style="position:absolute;left:396px;top:224px;" width="6" height="4" viewBox="0 0 6 4"><path d="M0 0 H6 L3 3.5 Z" fill="#555"/></svg>
<div style="position:absolute;left:410px;top:215px;width:1px;height:22px;background:#d6d6d6"></div>
<svg style="position:absolute;left:418px;top:217px;" width="17" height="18" viewBox="0 0 17 18"><path d="M3 7 L8 2 L13 7 L8 12 Z" fill="#fff" stroke="#444" stroke-width="1.1"/><path d="M14 8 Q16 11 14.5 12 Q13 11 14 8" fill="#3f74b5"/><rect x="1" y="14" width="15" height="3.5" fill="#ffff00"/></svg>
<svg style="position:absolute;left:439px;top:224px;" width="6" height="4" viewBox="0 0 6 4"><path d="M0 0 H6 L3 3.5 Z" fill="#555"/></svg>
<div style="position:absolute;left:455.5px;top:215.25px;height:17.5px;line-height:17.5px;font-size:13.5px;color:#555;white-space:nowrap;font-weight:bold">A</div>
<div style="position:absolute;left:452px;top:231px;width:16px;height:4px;background:#e00000"></div>
<svg style="position:absolute;left:473px;top:224px;" width="6" height="4" viewBox="0 0 6 4"><path d="M0 0 H6 L3 3.5 Z" fill="#555"/></svg>
<div style="position:absolute;left:576px;top:169px;width:22px;height:22px;background:#c6c6c6"></div>
<svg style="position:absolute;left:535px;top:170px;" width="16" height="16" viewBox="0 0 16 16"><path d="M1 2.5 H15" stroke="#555" stroke-width="1"/><path d="M1 5.5 H15" stroke="#555" stroke-width="1"/><path d="M1 8.5 H15" stroke="#555" stroke-width="1"/></svg>
<svg style="position:absolute;left:557px;top:171px;" width="16" height="16" viewBox="0 0 16 16"><path d="M1 5.5 H15" stroke="#555" stroke-width="1"/><path d="M1 8.5 H15" stroke="#555" stroke-width="1"/><path d="M1 11.5 H15" stroke="#555" stroke-width="1"/></svg>
<svg style="position:absolute;left:580px;top:172px;" width="16" height="16" viewBox="0 0 16 16"><path d="M1 9.5 H15" stroke="#555" stroke-width="1"/><path d="M2 12.5 H14" stroke="#555" stroke-width="1"/><path d="M1 15.5 H15" stroke="#555" stroke-width="1"/></svg>
<div style="position:absolute;left:605px;top:168.25px;height:15.5px;line-height:15.5px;font-size:11.5px;color:#444;white-space:nowrap;letter-spacing:-0.3px">ab</div>
<div style="position:absolute;left:605px;top:176.75px;height:15.5px;line-height:15.5px;font-size:11.5px;color:#444;white-space:nowrap;">c</div>
<svg style="position:absolute;left:612px;top:181px;" width="7" height="6" viewBox="0 0 7 6"><path d="M6 0 V4 H1 M3 2 L1 4 L3 6" fill="none" stroke="#3f74b5" stroke-width="1"/></svg>
<svg style="position:absolute;left:535px;top:195px;" width="16" height="16" viewBox="0 0 16 16"><path d="M1 2.5 H15" stroke="#555" stroke-width="1"/><path d="M1 5.5 H11" stroke="#555" stroke-width="1"/><path d="M1 8.5 H15" stroke="#555" stroke-width="1"/><path d="M1 11.5 H11" stroke="#555" stroke-width="1"/></svg>
<svg style="position:absolute;left:557px;top:195px;" width="16" height="16" viewBox="0 0 16 16"><path d="M1 2.5 H15" stroke="#555" stroke-width="1"/><path d="M3 5.5 H13" stroke="#555" stroke-width="1"/><path d="M1 8.5 H15" stroke="#555" stroke-width="1"/><path d="M3 11.5 H13" stroke="#555" stroke-width="1"/></svg>
<svg style="position:absolute;left:579px;top:195px;" width="16" height="16" viewBox="0 0 16 16"><path d="M1 2.5 H15" stroke="#555" stroke-width="1"/><path d="M5 5.5 H15" stroke="#555" stroke-width="1"/><path d="M1 8.5 H15" stroke="#555" stroke-width="1"/><path d="M5 11.5 H15" stroke="#555" stroke-width="1"/></svg>
<svg style="position:absolute;left:604px;top:195px;" width="16" height="15" viewBox="0 0 16 15"><rect x="0.5" y="0.5" width="15" height="14" fill="none" stroke="#555"/><path d="M0.5 4.5 H15.5 M0.5 10.5 H15.5 M5.5 0.5 V4.5 M10.5 0.5 V4.5 M5.5 10.5 V14.5" stroke="#555"/><path d="M3 7.5 H13 M4.5 6 L3 7.5 L4.5 9 M11.5 6 L13 7.5 L11.5 9" fill="none" stroke="#3f74b5"/></svg>
<svg style="position:absolute;left:625px;top:202px;" width="6" height="4" viewBox="0 0 6 4"><path d="M0 0 H6 L3 3.5 Z" fill="#555"/></svg>
<svg style="position:absolute;left:534px;top:218px;" width="18" height="16" viewBox="0 0 18 16"><path d="M7 2.5 H17 M9 6.5 H17 M9 10.5 H17 M1 14.5 H17" stroke="#555"/><path d="M7 8.5 H1.5 M4 6 L1.5 8.5 L4 11" fill="none" stroke="#3f74b5" stroke-width="1.4"/></svg>
<svg style="position:absolute;left:556px;top:218px;" width="18" height="16" viewBox="0 0 18 16"><path d="M1 2.5 H17 M9 6.5 H17 M9 10.5 H17 M1 14.5 H17" stroke="#555"/><path d="M1 8.5 H7 M4.5 6 L7 8.5 L4.5 11" fill="none" stroke="#3f74b5" stroke-width="1.4"/></svg>
<div style="position:absolute;left:581px;top:215px;width:1px;height:22px;background:#d6d6d6"></div>
<svg style="position:absolute;left:588px;top:217px;" width="22" height="18" viewBox="0 0 22 18"><text x="1" y="14" font-size="11" fill="#444" transform="rotate(-45 7 10)" font-family="Liberation Sans">ab</text><path d="M7 17 L19 5 M15 4.5 H19.5 V9" fill="none" stroke="#444" stroke-width="1.2"/></svg>
<svg style="position:absolute;left:609px;top:224px;" width="6" height="4" viewBox="0 0 6 4"><path d="M0 0 H6 L3 3.5 Z" fill="#555"/></svg>
<div style="position:absolute;left:652px;top:169px;width:78px;height:22px;background:#fff;border:1px solid #c6c6c6"></div>
<div style="position:absolute;left:655.3px;top:172.2px;height:16.6px;line-height:16.6px;font-size:12.6px;color:#333;white-space:nowrap;transform:scaleX(0.8834);transform-origin:0 50%;">General</div>
<svg style="position:absolute;left:711px;top:175px;" width="15" height="9" viewBox="0 0 15 9"><path d="M1 1 L7.5 7.5 L14 1" fill="none" stroke="#444" stroke-width="1.2"/></svg>
<div style="position:absolute;left:659px;top:192.5px;height:19px;line-height:19px;font-size:15px;color:#444;white-space:nowrap;">$</div>
<svg style="position:absolute;left:677px;top:201px;" width="6" height="4" viewBox="0 0 6 4"><path d="M0 0 H6 L3 3.5 Z" fill="#555"/></svg>
<div style="position:absolute;left:691.5px;top:193.75px;height:18.5px;line-height:18.5px;font-size:14.5px;color:#444;white-space:nowrap;">%</div>
<div style="position:absolute;left:716px;top:191.0px;height:18px;line-height:18px;font-size:14px;color:#444;white-space:nowrap;"><b>,</b></div>
<div style="position:absolute;left:662px;top:213.75px;height:13.5px;line-height:13.5px;font-size:9.5px;color:#444;white-space:nowrap;letter-spacing:-0.3px">.0</div>
<div style="position:absolute;left:657px;top:221.75px;height:13.5px;line-height:13.5px;font-size:9.5px;color:#444;white-space:nowrap;letter-spacing:-0.3px">.00</div>
<svg style="position:absolute;left:655px;top:217px;" width="7" height="7" viewBox="0 0 7 7"><path d="M6 3.5 H1 M3.5 1 L1 3.5 L3.5 6" fill="none" stroke="#3f74b5" stroke-width="1.1"/></svg>
<div style="position:absolute;left:679.5px;top:213.75px;height:13.5px;line-height:13.5px;font-size:9.5px;color:#444;white-space:nowrap;letter-spacing:-0.3px">.00</div>
<div style="position:absolute;left:685.5px;top:221.75px;height:13.5px;line-height:13.5px;font-size:9.5px;color:#444;white-space:nowrap;letter-spacing:-0.3px">.0</div>
<svg style="position:absolute;left:676.5px;top:225px;" width="8" height="7" viewBox="0 0 8 7"><path d="M0.5 3.5 H6.5 M4 1 L6.5 3.5 L4 6" fill="none" stroke="#3f74b5" stroke-width="1.1"/></svg>
<svg style="position:absolute;left:748px;top:171px;" width="18" height="18" viewBox="0 0 18 18"><rect x="1.5" y="1.5" width="13" height="11" fill="#fff" stroke="#666" stroke-width="1"/><rect x="1" y="1" width="7" height="3" fill="#c0504d"/><rect x="1" y="4" width="4" height="3" fill="#4f6fa8"/><rect x="1" y="7" width="4" height="3" fill="#c0504d"/><rect x="1" y="10" width="4" height="3" fill="#c0504d"/><rect x="7.5" y="7.5" width="9.5" height="9.5" fill="#fff" stroke="#555" stroke-width="1"/><path d="M10 11 H15 M10 13.5 H15 M13.5 9.5 L11.5 15" stroke="#333" stroke-width="0.9"/></svg>
<div style="position:absolute;left:768.5px;top:172.7px;height:16.6px;line-height:16.6px;font-size:12.6px;color:#262626;white-space:nowrap;transform:scaleX(0.9703);transform-origin:0 50%;">Conditional Formatting</div>
<svg style="position:absolute;left:895px;top:180px;" width="6" height="4" viewBox="0 0 6 4"><path d="M0 0 H6 L3 3.5 Z" fill="#555"/></svg>
<svg style="position:absolute;left:748px;top:194px;" width="18" height="19" viewBox="0 0 18 19"><rect x="1.5" y="1.5" width="15" height="12" fill="#fff" stroke="#666"/><path d="M1.5 5.5 H16.5 M1.5 9.5 H16.5 M6.5 1.5 V13.5 M11.5 1.5 V13.5" stroke="#888"/><rect x="7" y="6" width="4" height="7" fill="#c9cdd3"/><path d="M17 5 L11 11" stroke="#555" stroke-width="2.6"/><path d="M11 11 Q8 11 6 14 L4 18 L8 16.5 Q11 14.5 11 11 Z" fill="#4a6fa5"/></svg>
<div style="position:absolute;left:768.5px;top:195.2px;height:16.6px;line-height:16.6px;font-size:12.6px;color:#262626;white-space:nowrap;transform:scaleX(0.8878);transform-origin:0 50%;">Format as Table</div>
<svg style="position:absolute;left:854px;top:202px;" width="6" height="4" viewBox="0 0 6 4"><path d="M0 0 H6 L3 3.5 Z" fill="#555"/></svg>
<svg style="position:absolute;left:748px;top:217px;" width="18" height="19" viewBox="0 0 18 19"><rect x="1.5" y="1.5" width="15" height="12" fill="#fff" stroke="#666"/><path d="M1.5 4.5 H16.5 M4.5 1.5 V13.5" stroke="#888"/><rect x="5" y="5" width="9" height="8" fill="#c9cdd3"/><path d="M17 5 L11 11" stroke="#555" stroke-width="2.6"/><path d="M11 11 Q8 11 6 14 L4 18 L8 16.5 Q11 14.5 11 11 Z" fill="#4a6fa5"/></svg>
<div style="position:absolute;left:768.5px;top:217.7px;height:16.6px;line-height:16.6px;font-size:12.6px;color:#262626;white-space:nowrap;transform:scaleX(0.8737);transform-origin:0 50%;">Cell Styles</div>
<svg style="position:absolute;left:824px;top:225px;" width="6" height="4" viewBox="0 0 6 4"><path d="M0 0 H6 L3 3.5 Z" fill="#555"/></svg>
<svg style="position:absolute;left:925px;top:171px;" width="18" height="18" viewBox="0 0 18 18"><path d="M1.5 1.5 H9.5 V5.5 H1.5 Z M5.5 1.5 V5.5 M1.5 10.5 H9.5 V16.5 H1.5 Z M1.5 13.5 H9.5 M5.5 10.5 V16.5" fill="none" stroke="#666"/><rect x="8.5" y="6.5" width="8" height="3.5" fill="#d0d0d0" stroke="#777"/><path d="M12.5 6.5 V10" stroke="#777"/><path d="M8 8.2 H1.5 M4 6 L1.5 8.2 L4 10.5" fill="none" stroke="#3f6fa8" stroke-width="1.6"/></svg>
<div style="position:absolute;left:945px;top:172.7px;height:16.6px;line-height:16.6px;font-size:12.6px;color:#262626;white-space:nowrap;transform:scaleX(0.9203);transform-origin:0 50%;">Insert</div>
<svg style="position:absolute;left:983px;top:180px;" width="6" height="4" viewBox="0 0 6 4"><path d="M0 0 H6 L3 3.5 Z" fill="#555"/></svg>
<svg style="position:absolute;left:925px;top:194px;" width="18" height="18" viewBox="0 0 18 18"><path d="M1.5 1.5 H9.5 V5.5 H1.5 Z M5.5 1.5 V5.5 M1.5 10.5 H9.5 V16.5 H1.5 Z M1.5 13.5 H9.5 M5.5 10.5 V16.5" fill="none" stroke="#666"/><rect x="1.5" y="6" width="6" height="4" fill="#d0d0d0" stroke="#777"/><path d="M9.5 5 L15.5 11 M15.5 5 L9.5 11" stroke="#e06c4c" stroke-width="1.7"/></svg>
<div style="position:absolute;left:945px;top:195.2px;height:16.6px;line-height:16.6px;font-size:12.6px;color:#262626;white-space:nowrap;transform:scaleX(0.9060);transform-origin:0 50%;">Delete</div>
<svg style="position:absolute;left:987px;top:202px;" width="6" height="4" viewBox="0 0 6 4"><path d="M0 0 H6 L3 3.5 Z" fill="#555"/></svg>
<svg style="position:absolute;left:925px;top:216px;" width="17" height="19" viewBox="0 0 17 19"><path d="M1 1 V4 M15 1 V4 M2 2.5 H14 M3.5 1 L2 2.5 L3.5 4 M12.5 1 L14 2.5 L12.5 4" fill="none" stroke="#3f6fa8" stroke-width="1"/><rect x="1.5" y="5.5" width="14" height="11" fill="#fff" stroke="#666"/><path d="M1.5 9.5 H15.5 M1.5 13 H15.5 M6 5.5 V16.5 M11 5.5 V16.5" stroke="#888"/><rect x="5.5" y="9" width="6" height="4.5" fill="#3f5f8a"/><path d="M2 18.5 H15" stroke="#999"/></svg>
<div style="position:absolute;left:945px;top:217.7px;height:16.6px;line-height:16.6px;font-size:12.6px;color:#262626;white-space:nowrap;transform:scaleX(0.9522);transform-origin:0 50%;">Format</div>
<svg style="position:absolute;left:985px;top:225px;" width="6" height="4" viewBox="0 0 6 4"><path d="M0 0 H6 L3 3.5 Z" fill="#555"/></svg>
<div style="position:absolute;left:1017px;top:170px;width:32px;height:30px;background:#fff;border:1px solid #dadada"></div>
<svg style="position:absolute;left:1025px;top:177px;" width="15" height="15" viewBox="0 0 15 15"><circle cx="9" cy="6" r="4.2" fill="none" stroke="#3f5f8a" stroke-width="1.6"/><path d="M6 9 L1.5 13.5" stroke="#3f5f8a" stroke-width="2.2"/></svg>
<div style="position:absolute;left:1014px;top:204.7px;height:16.6px;line-height:16.6px;font-size:12.6px;color:#262626;white-space:nowrap;transform:scaleX(0.9344);transform-origin:0 50%;">Editing</div>
<svg style="position:absolute;left:1029px;top:226.5px;" width="6" height="4" viewBox="0 0 6 4"><path d="M0 0 H6 L3 3.5 Z" fill="#555"/></svg>
<div style="position:absolute;left:1088px;top:176px;width:24px;height:27px;border:1px solid #ececec"></div>
<div style="position:absolute;left:1090px;top:181px;width:12px;height:12px;border-radius:6px;background:#d4d4d4"></div>
<div style="position:absolute;left:1070px;top:206.7px;height:16.6px;line-height:16.6px;font-size:12.6px;color:#b3b3b3;white-space:nowrap;transform:scaleX(0.9168);transform-origin:0 50%;">Sensitivity</div>
<svg style="position:absolute;left:1093px;top:228px;" width="6" height="4" viewBox="0 0 6 4"><path d="M0 0 H6 L3 3.5 Z" fill="#ccc"/></svg>
<div style="position:absolute;left:271px;top:259px;width:896px;height:46px;background:#e6e6e6"></div>
<div style="position:absolute;left:276px;top:269px;width:102px;height:26px;background:#fff;border:1px solid #d0d0d0"></div>
<div style="position:absolute;left:283px;top:274.6px;height:16.8px;line-height:16.8px;font-size:12.8px;color:#333;white-space:nowrap;">J13</div>
<svg style="position:absolute;left:363px;top:279px;" width="8" height="5" viewBox="0 0 8 5"><path d="M0 0 H8 L4 4.5 Z" fill="#666"/></svg>
<div style="position:absolute;left:392px;top:276px;width:2px;height:2px;background:#9a9a9a"></div>
<div style="position:absolute;left:392px;top:282px;width:2px;height:2px;background:#9a9a9a"></div>
<div style="position:absolute;left:392px;top:288px;width:2px;height:2px;background:#9a9a9a"></div>
<div style="position:absolute;left:408px;top:269px;width:110px;height:26px;background:#fff;border:1px solid #d0d0d0"></div>
<svg style="position:absolute;left:421px;top:276px;" width="11" height="11" viewBox="0 0 11 11"><path d="M1 1 L10 10 M10 1 L1 10" stroke="#b5b5b5" stroke-width="1.3"/></svg>
<svg style="position:absolute;left:455px;top:276px;" width="14" height="12" viewBox="0 0 14 12"><path d="M1 6 L5 10.5 L13 1.5" fill="none" stroke="#bcbcbc" stroke-width="2"/></svg>
<div style="position:absolute;left:493px;top:272.5px;height:19px;line-height:19px;font-size:15px;color:#555;white-space:nowrap;"><b><i style='font-family:Liberation Serif'>f</i><i style='font-family:Liberation Serif;font-size:11px'>x</i></b></div>
<div style="position:absolute;left:521px;top:269px;width:641px;height:26px;background:#fff;border:1px solid #d0d0d0"></div>
<svg style="position:absolute;left:1148px;top:279px;" width="10" height="6" viewBox="0 0 10 6"><path d="M1 1 L5 5 L9 1" fill="none" stroke="#555" stroke-width="1.3"/></svg>
<div style="position:absolute;left:271px;top:305px;width:875px;height:20px;background:#e6e6e6"></div>
<div style="position:absolute;left:271px;top:325px;width:25px;height:403px;background:#e6e6e6"></div>
<div style="position:absolute;left:296px;top:325px;width:850px;height:403px;background:#fff"></div>
<div style="position:absolute;left:904px;top:305px;width:64px;height:20px;background:#d2d2d2"></div>
<div style="position:absolute;left:904px;top:323px;width:64px;height:2px;background:#217346"></div>
<div style="position:absolute;left:271px;top:565px;width:25px;height:19px;background:#d2d2d2"></div>
<div style="position:absolute;left:295px;top:565px;width:2px;height:19px;background:#217346"></div>
<svg style="position:absolute;left:281px;top:310px;" width="12" height="11" viewBox="0 0 12 11"><path d="M12 0 V11 H0 Z" fill="#b4b4b4"/></svg>
<div style="position:absolute;left:360px;top:305px;width:1px;height:20px;background:#c6c6c6"></div>
<div style="position:absolute;left:429px;top:305px;width:1px;height:20px;background:#c6c6c6"></div>
<div style="position:absolute;left:493px;top:305px;width:1px;height:20px;background:#c6c6c6"></div>
<div style="position:absolute;left:580px;top:305px;width:1px;height:20px;background:#c6c6c6"></div>
<div style="position:absolute;left:648px;top:305px;width:1px;height:20px;background:#c6c6c6"></div>
<div style="position:absolute;left:712px;top:305px;width:1px;height:20px;background:#c6c6c6"></div>
<div style="position:absolute;left:776px;top:305px;width:1px;height:20px;background:#c6c6c6"></div>
<div style="position:absolute;left:840px;top:305px;width:1px;height:20px;background:#c6c6c6"></div>
<div style="position:absolute;left:904px;top:305px;width:1px;height:20px;background:#c6c6c6"></div>
<div style="position:absolute;left:968px;top:305px;width:1px;height:20px;background:#c6c6c6"></div>
<div style="position:absolute;left:1032px;top:305px;width:1px;height:20px;background:#c6c6c6"></div>
<div style="position:absolute;left:1096px;top:305px;width:1px;height:20px;background:#c6c6c6"></div>
<div style="position:absolute;left:296px;top:305px;width:1px;height:20px;background:#c6c6c6"></div>
<div style="position:absolute;left:271px;top:324px;width:875px;height:1px;background:#9b9b9b"></div>
<div style="position:absolute;left:318.0px;top:306.0px;height:17px;line-height:17px;font-size:13px;color:#222;white-space:nowrap;width:20px;text-align:center">A</div>
<div style="position:absolute;left:384.5px;top:306.0px;height:17px;line-height:17px;font-size:13px;color:#222;white-space:nowrap;width:20px;text-align:center">B</div>
<div style="position:absolute;left:451.0px;top:306.0px;height:17px;line-height:17px;font-size:13px;color:#222;white-space:nowrap;width:20px;text-align:center">C</div>
<div style="position:absolute;left:526.5px;top:306.0px;height:17px;line-height:17px;font-size:13px;color:#222;white-space:nowrap;width:20px;text-align:center">D</div>
<div style="position:absolute;left:604.0px;top:306.0px;height:17px;line-height:17px;font-size:13px;color:#222;white-space:nowrap;width:20px;text-align:center">E</div>
<div style="position:absolute;left:670.0px;top:306.0px;height:17px;line-height:17px;font-size:13px;color:#222;white-space:nowrap;width:20px;text-align:center">F</div>
<div style="position:absolute;left:734.0px;top:306.0px;height:17px;line-height:17px;font-size:13px;color:#222;white-space:nowrap;width:20px;text-align:center">G</div>
<div style="position:absolute;left:798.0px;top:306.0px;height:17px;line-height:17px;font-size:13px;color:#222;white-space:nowrap;width:20px;text-align:center">H</div>
<div style="position:absolute;left:862.0px;top:306.0px;height:17px;line-height:17px;font-size:13px;color:#222;white-space:nowrap;width:20px;text-align:center">I</div>
<div style="position:absolute;left:926.0px;top:306.0px;height:17px;line-height:17px;font-size:13px;color:#1e5a38;white-space:nowrap;width:20px;text-align:center">J</div>
<div style="position:absolute;left:990.0px;top:306.0px;height:17px;line-height:17px;font-size:13px;color:#222;white-space:nowrap;width:20px;text-align:center">K</div>
<div style="position:absolute;left:1054.0px;top:306.0px;height:17px;line-height:17px;font-size:13px;color:#222;white-space:nowrap;width:20px;text-align:center">L</div>
<div style="position:absolute;left:1118.0px;top:306.0px;height:17px;line-height:17px;font-size:13px;color:#222;white-space:nowrap;width:20px;text-align:center">M</div>
<div style="position:absolute;left:360px;top:325px;width:1px;height:403px;background:#d4d4d4"></div>
<div style="position:absolute;left:429px;top:325px;width:1px;height:403px;background:#d4d4d4"></div>
<div style="position:absolute;left:493px;top:325px;width:1px;height:403px;background:#d4d4d4"></div>
<div style="position:absolute;left:580px;top:325px;width:1px;height:403px;background:#d4d4d4"></div>
<div style="position:absolute;left:648px;top:325px;width:1px;height:403px;background:#d4d4d4"></div>
<div style="position:absolute;left:712px;top:325px;width:1px;height:403px;background:#d4d4d4"></div>
<div style="position:absolute;left:776px;top:325px;width:1px;height:403px;background:#d4d4d4"></div>
<div style="position:absolute;left:840px;top:325px;width:1px;height:403px;background:#d4d4d4"></div>
<div style="position:absolute;left:904px;top:325px;width:1px;height:403px;background:#d4d4d4"></div>
<div style="position:absolute;left:968px;top:325px;width:1px;height:403px;background:#d4d4d4"></div>
<div style="position:absolute;left:1032px;top:325px;width:1px;height:403px;background:#d4d4d4"></div>
<div style="position:absolute;left:1096px;top:325px;width:1px;height:403px;background:#d4d4d4"></div>
<div style="position:absolute;left:296px;top:344px;width:850px;height:1px;background:#d4d4d4"></div>
<div style="position:absolute;left:271px;top:344px;width:25px;height:1px;background:#c6c6c6"></div>
<div style="position:absolute;left:296px;top:364px;width:850px;height:1px;background:#d4d4d4"></div>
<div style="position:absolute;left:271px;top:364px;width:25px;height:1px;background:#c6c6c6"></div>
<div style="position:absolute;left:296px;top:384px;width:850px;height:1px;background:#d4d4d4"></div>
<div style="position:absolute;left:271px;top:384px;width:25px;height:1px;background:#c6c6c6"></div>
<div style="position:absolute;left:296px;top:404px;width:850px;height:1px;background:#d4d4d4"></div>
<div style="position:absolute;left:271px;top:404px;width:25px;height:1px;background:#c6c6c6"></div>
<div style="position:absolute;left:296px;top:424px;width:850px;height:1px;background:#d4d4d4"></div>
<div style="position:absolute;left:271px;top:424px;width:25px;height:1px;background:#c6c6c6"></div>
<div style="position:absolute;left:296px;top:444px;width:850px;height:1px;background:#d4d4d4"></div>
<div style="position:absolute;left:271px;top:444px;width:25px;height:1px;background:#c6c6c6"></div>
<div style="position:absolute;left:296px;top:464px;width:850px;height:1px;background:#d4d4d4"></div>
<div style="position:absolute;left:271px;top:464px;width:25px;height:1px;background:#c6c6c6"></div>
<div style="position:absolute;left:296px;top:484px;width:850px;height:1px;background:#d4d4d4"></div>
<div style="position:absolute;left:271px;top:484px;width:25px;height:1px;background:#c6c6c6"></div>
<div style="position:absolute;left:296px;top:504px;width:850px;height:1px;background:#d4d4d4"></div>
<div style="position:absolute;left:271px;top:504px;width:25px;height:1px;background:#c6c6c6"></div>
<div style="position:absolute;left:296px;top:524px;width:850px;height:1px;background:#d4d4d4"></div>
<div style="position:absolute;left:271px;top:524px;width:25px;height:1px;background:#c6c6c6"></div>
<div style="position:absolute;left:296px;top:544px;width:850px;height:1px;background:#d4d4d4"></div>
<div style="position:absolute;left:271px;top:544px;width:25px;height:1px;background:#c6c6c6"></div>
<div style="position:absolute;left:296px;top:564px;width:850px;height:1px;background:#d4d4d4"></div>
<div style="position:absolute;left:271px;top:564px;width:25px;height:1px;background:#c6c6c6"></div>
<div style="position:absolute;left:296px;top:584px;width:850px;height:1px;background:#d4d4d4"></div>
<div style="position:absolute;left:271px;top:584px;width:25px;height:1px;background:#c6c6c6"></div>
<div style="position:absolute;left:296px;top:604px;width:850px;height:1px;background:#d4d4d4"></div>
<div style="position:absolute;left:271px;top:604px;width:25px;height:1px;background:#c6c6c6"></div>
<div style="position:absolute;left:296px;top:624px;width:850px;height:1px;background:#d4d4d4"></div>
<div style="position:absolute;left:271px;top:624px;width:25px;height:1px;background:#c6c6c6"></div>
<div style="position:absolute;left:296px;top:644px;width:850px;height:1px;background:#d4d4d4"></div>
<div style="position:absolute;left:271px;top:644px;width:25px;height:1px;background:#c6c6c6"></div>
<div style="position:absolute;left:296px;top:664px;width:850px;height:1px;background:#d4d4d4"></div>
<div style="position:absolute;left:271px;top:664px;width:25px;height:1px;background:#c6c6c6"></div>
<div style="position:absolute;left:296px;top:684px;width:850px;height:1px;background:#d4d4d4"></div>
<div style="position:absolute;left:271px;top:684px;width:25px;height:1px;background:#c6c6c6"></div>
<div style="position:absolute;left:296px;top:704px;width:850px;height:1px;background:#d4d4d4"></div>
<div style="position:absolute;left:271px;top:704px;width:25px;height:1px;background:#c6c6c6"></div>
<div style="position:absolute;left:296px;top:724px;width:850px;height:1px;background:#d4d4d4"></div>
<div style="position:absolute;left:271px;top:724px;width:25px;height:1px;background:#c6c6c6"></div>
<div style="position:absolute;left:296px;top:744px;width:850px;height:1px;background:#d4d4d4"></div>
<div style="position:absolute;left:271px;top:744px;width:25px;height:1px;background:#c6c6c6"></div>
<div style="position:absolute;left:296px;top:325px;width:1px;height:403px;background:#9b9b9b"></div>
<div style="position:absolute;left:271.2px;top:328.2px;height:16.6px;line-height:16.6px;font-size:12.6px;color:#222;white-space:nowrap;width:24px;text-align:center">1</div>
<div style="position:absolute;left:271.2px;top:348.2px;height:16.6px;line-height:16.6px;font-size:12.6px;color:#222;white-space:nowrap;width:24px;text-align:center">2</div>
<div style="position:absolute;left:271.2px;top:368.2px;height:16.6px;line-height:16.6px;font-size:12.6px;color:#222;white-space:nowrap;width:24px;text-align:center">3</div>
<div style="position:absolute;left:271.2px;top:388.2px;height:16.6px;line-height:16.6px;font-size:12.6px;color:#222;white-space:nowrap;width:24px;text-align:center">4</div>
<div style="position:absolute;left:271.2px;top:408.2px;height:16.6px;line-height:16.6px;font-size:12.6px;color:#222;white-space:nowrap;width:24px;text-align:center">5</div>
<div style="position:absolute;left:271.2px;top:428.2px;height:16.6px;line-height:16.6px;font-size:12.6px;color:#222;white-space:nowrap;width:24px;text-align:center">6</div>
<div style="position:absolute;left:271.2px;top:448.2px;height:16.6px;line-height:16.6px;font-size:12.6px;color:#222;white-space:nowrap;width:24px;text-align:center">7</div>
<div style="position:absolute;left:271.2px;top:468.2px;height:16.6px;line-height:16.6px;font-size:12.6px;color:#222;white-space:nowrap;width:24px;text-align:center">8</div>
<div style="position:absolute;left:271.2px;top:488.2px;height:16.6px;line-height:16.6px;font-size:12.6px;color:#222;white-space:nowrap;width:24px;text-align:center">9</div>
<div style="position:absolute;left:271.2px;top:508.2px;height:16.6px;line-height:16.6px;font-size:12.6px;color:#222;white-space:nowrap;width:24px;text-align:center">10</div>
<div style="position:absolute;left:271.2px;top:528.2px;height:16.6px;line-height:16.6px;font-size:12.6px;color:#222;white-space:nowrap;width:24px;text-align:center">11</div>
<div style="position:absolute;left:271.2px;top:548.2px;height:16.6px;line-height:16.6px;font-size:12.6px;color:#222;white-space:nowrap;width:24px;text-align:center">12</div>
<div style="position:absolute;left:271.2px;top:568.2px;height:16.6px;line-height:16.6px;font-size:12.6px;color:#555;white-space:nowrap;width:24px;text-align:center">13</div>
<div style="position:absolute;left:271.2px;top:588.2px;height:16.6px;line-height:16.6px;font-size:12.6px;color:#222;white-space:nowrap;width:24px;text-align:center">14</div>
<div style="position:absolute;left:271.2px;top:608.2px;height:16.6px;line-height:16.6px;font-size:12.6px;color:#222;white-space:nowrap;width:24px;text-align:center">15</div>
<div style="position:absolute;left:271.2px;top:628.2px;height:16.6px;line-height:16.6px;font-size:12.6px;color:#222;white-space:nowrap;width:24px;text-align:center">16</div>
<div style="position:absolute;left:271.2px;top:648.2px;height:16.6px;line-height:16.6px;font-size:12.6px;color:#222;white-space:nowrap;width:24px;text-align:center">17</div>
<div style="position:absolute;left:271.2px;top:668.2px;height:16.6px;line-height:16.6px;font-size:12.6px;color:#222;white-space:nowrap;width:24px;text-align:center">18</div>
<div style="position:absolute;left:271.2px;top:688.2px;height:16.6px;line-height:16.6px;font-size:12.6px;color:#222;white-space:nowrap;width:24px;text-align:center">19</div>
<div style="position:absolute;left:271.2px;top:708.2px;height:16.6px;line-height:16.6px;font-size:12.6px;color:#222;white-space:nowrap;width:24px;text-align:center">20</div>
<div style="position:absolute;left:1146px;top:305px;width:1px;height:423px;background:#c6c6c6"></div>
<div style="position:absolute;left:1147px;top:299px;width:20px;height:429px;background:#e6e6e6"></div>
<div style="position:absolute;left:1149px;top:307px;width:15px;height:16px;background:#fff;border:1px solid #c6c6c6"></div>
<svg style="position:absolute;left:1152px;top:311px;" width="9" height="6" viewBox="0 0 9 6"><path d="M0 5 L4.5 0.5 L9 5 Z" fill="#606060"/></svg>
<div style="position:absolute;left:1149px;top:323px;width:15px;height:382px;background:#fff;border:1px solid #c6c6c6"></div>
<div style="position:absolute;left:1149px;top:705px;width:15px;height:23px;background:#dadada"></div>
<div style="position:absolute;left:493px;top:365px;width:1px;height:19px;background:#fff"></div>
<div style="position:absolute;left:580px;top:365px;width:1px;height:19px;background:#fff"></div>
<div style="position:absolute;left:712px;top:365px;width:1px;height:19px;background:#fff"></div>
<div style="position:absolute;left:776px;top:365px;width:1px;height:19px;background:#fff"></div>
<div style="position:absolute;left:904px;top:365px;width:1px;height:19px;background:#fff"></div>
<div style="position:absolute;left:968px;top:365px;width:1px;height:19px;background:#fff"></div>
<div style="position:absolute;left:493px;top:525px;width:1px;height:19px;background:#fff"></div>
<div style="position:absolute;left:580px;top:525px;width:1px;height:19px;background:#fff"></div>
<div style="position:absolute;left:648px;top:525px;width:1px;height:19px;background:#fff"></div>
<div style="position:absolute;left:712px;top:525px;width:1px;height:19px;background:#fff"></div>
<div style="position:absolute;left:776px;top:525px;width:1px;height:19px;background:#fff"></div>
<div style="position:absolute;left:840px;top:525px;width:1px;height:19px;background:#fff"></div>
<div style="position:absolute;left:493px;top:545px;width:1px;height:19px;background:#fff"></div>
<div style="position:absolute;left:580px;top:545px;width:1px;height:19px;background:#fff"></div>
<div style="position:absolute;left:648px;top:545px;width:1px;height:19px;background:#fff"></div>
<div style="position:absolute;left:712px;top:545px;width:1px;height:19px;background:#fff"></div>
<div style="position:absolute;left:776px;top:545px;width:1px;height:19px;background:#fff"></div>
<div style="position:absolute;left:840px;top:545px;width:1px;height:19px;background:#fff"></div>
<div style="position:absolute;left:904px;top:444px;width:64px;height:20px;background:#ffff00"></div>
<div style="position:absolute;left:429px;top:367px;width:219px;height:18px;line-height:18px;font-size:13.5px;text-align:center;white-space:nowrap">Purchase/Beginning</div>
<div style="position:absolute;left:648px;top:367px;width:192px;height:18px;line-height:18px;font-size:13.5px;text-align:center;white-space:nowrap">Cost of Goods Sold</div>
<div style="position:absolute;left:840px;top:367px;width:192px;height:18px;line-height:18px;font-size:13.5px;text-align:center;white-space:nowrap">Ending Inventory</div>
<div style="position:absolute;left:432px;top:387.25px;height:17.5px;line-height:17.5px;font-size:13.5px;color:#000;white-space:nowrap;">Unit</div>
<div style="position:absolute;left:496px;top:387.25px;height:17.5px;line-height:17.5px;font-size:13.5px;color:#000;white-space:nowrap;">Per Unit Cost</div>
<div style="position:absolute;left:583px;top:387.25px;height:17.5px;line-height:17.5px;font-size:13.5px;color:#000;white-space:nowrap;">Total Cost</div>
<div style="position:absolute;left:651px;top:387.25px;height:17.5px;line-height:17.5px;font-size:13.5px;color:#000;white-space:nowrap;">Unit</div>
<div style="position:absolute;left:715px;top:387px;width:61px;height:18px;line-height:18px;font-size:13.5px;white-space:nowrap;overflow:hidden">Per Unit Cost</div>
<div style="position:absolute;left:779px;top:387.25px;height:17.5px;line-height:17.5px;font-size:13.5px;color:#000;white-space:nowrap;">Total Cost</div>
<div style="position:absolute;left:843px;top:387.25px;height:17.5px;line-height:17.5px;font-size:13.5px;color:#000;white-space:nowrap;">Unit</div>
<div style="position:absolute;left:907px;top:387px;width:61px;height:18px;line-height:18px;font-size:13.5px;white-space:nowrap;overflow:hidden">Per Unit Cost</div>
<div style="position:absolute;left:971px;top:387.25px;height:17.5px;line-height:17.5px;font-size:13.5px;color:#000;white-space:nowrap;">Total Cost</div>
<div style="position:absolute;left:299px;top:407.25px;height:17.5px;line-height:17.5px;font-size:13.5px;color:#000;white-space:nowrap;">Jan. 1</div>
<div style="position:absolute;left:363px;top:407.25px;height:17.5px;line-height:17.5px;font-size:13.5px;color:#000;white-space:nowrap;">Beginning</div>
<div style="position:absolute;left:429px;top:407px;width:62px;height:18px;line-height:18px;font-size:13.5px;text-align:right;white-space:nowrap">140</div>
<div style="position:absolute;left:493px;top:407px;width:85px;height:18px;line-height:18px;font-size:13.5px;text-align:right;white-space:nowrap">6</div>
<div style="position:absolute;left:580px;top:407px;width:66px;height:18px;line-height:18px;font-size:13.5px;text-align:right;white-space:nowrap">840</div>
<div style="position:absolute;left:840px;top:407px;width:62px;height:18px;line-height:18px;font-size:13.5px;text-align:right;white-space:nowrap">140</div>
<div style="position:absolute;left:904px;top:407px;width:62px;height:18px;line-height:18px;font-size:13.5px;text-align:right;white-space:nowrap">6</div>
<div style="position:absolute;left:968px;top:407px;width:62px;height:18px;line-height:18px;font-size:13.5px;text-align:right;white-space:nowrap">840</div>
<div style="position:absolute;left:299px;top:427.25px;height:17.5px;line-height:17.5px;font-size:13.5px;color:#000;white-space:nowrap;">Jan. 10</div>
<div style="position:absolute;left:363px;top:427.25px;height:17.5px;line-height:17.5px;font-size:13.5px;color:#000;white-space:nowrap;">Sale</div>
<div style="position:absolute;left:648px;top:427px;width:62px;height:18px;line-height:18px;font-size:13.5px;text-align:right;white-space:nowrap">100</div>
<div style="position:absolute;left:712px;top:427px;width:62px;height:18px;line-height:18px;font-size:13.5px;text-align:right;white-space:nowrap">6</div>
<div style="position:absolute;left:776px;top:427px;width:62px;height:18px;line-height:18px;font-size:13.5px;text-align:right;white-space:nowrap">600</div>
<div style="position:absolute;left:840px;top:427px;width:62px;height:18px;line-height:18px;font-size:13.5px;text-align:right;white-space:nowrap">40</div>
<div style="position:absolute;left:904px;top:427px;width:62px;height:18px;line-height:18px;font-size:13.5px;text-align:right;white-space:nowrap">6</div>
<div style="position:absolute;left:968px;top:427px;width:62px;height:18px;line-height:18px;font-size:13.5px;text-align:right;white-space:nowrap">240</div>
<div style="position:absolute;left:299px;top:447.25px;height:17.5px;line-height:17.5px;font-size:13.5px;color:#000;white-space:nowrap;">Jan. 20</div>
<div style="position:absolute;left:363px;top:447.25px;height:17.5px;line-height:17.5px;font-size:13.5px;color:#000;white-space:nowrap;">Purchase</div>
<div style="position:absolute;left:429px;top:447px;width:62px;height:18px;line-height:18px;font-size:13.5px;text-align:right;white-space:nowrap">60</div>
<div style="position:absolute;left:493px;top:447px;width:85px;height:18px;line-height:18px;font-size:13.5px;text-align:right;white-space:nowrap">5</div>
<div style="position:absolute;left:580px;top:447px;width:66px;height:18px;line-height:18px;font-size:13.5px;text-align:right;white-space:nowrap">300</div>
<div style="position:absolute;left:840px;top:447px;width:62px;height:18px;line-height:18px;font-size:13.5px;text-align:right;white-space:nowrap">100</div>
<div style="position:absolute;left:904px;top:447px;width:62px;height:18px;line-height:18px;font-size:13.5px;text-align:right;white-space:nowrap">5.4</div>
<div style="position:absolute;left:968px;top:447px;width:62px;height:18px;line-height:18px;font-size:13.5px;text-align:right;white-space:nowrap">540</div>
<div style="position:absolute;left:299px;top:467.25px;height:17.5px;line-height:17.5px;font-size:13.5px;color:#000;white-space:nowrap;">Jan. 25</div>
<div style="position:absolute;left:363px;top:467.25px;height:17.5px;line-height:17.5px;font-size:13.5px;color:#000;white-space:nowrap;">Sale</div>
<div style="position:absolute;left:648px;top:467px;width:62px;height:18px;line-height:18px;font-size:13.5px;text-align:right;white-space:nowrap">80</div>
<div style="position:absolute;left:712px;top:467px;width:62px;height:18px;line-height:18px;font-size:13.5px;text-align:right;white-space:nowrap">5.4</div>
<div style="position:absolute;left:776px;top:467px;width:62px;height:18px;line-height:18px;font-size:13.5px;text-align:right;white-space:nowrap">432</div>
<div style="position:absolute;left:840px;top:467px;width:62px;height:18px;line-height:18px;font-size:13.5px;text-align:right;white-space:nowrap">20</div>
<div style="position:absolute;left:904px;top:467px;width:62px;height:18px;line-height:18px;font-size:13.5px;text-align:right;white-space:nowrap">5.4</div>
<div style="position:absolute;left:968px;top:467px;width:62px;height:18px;line-height:18px;font-size:13.5px;text-align:right;white-space:nowrap">108</div>
<div style="position:absolute;left:299px;top:487.25px;height:17.5px;line-height:17.5px;font-size:13.5px;color:#000;white-space:nowrap;">Jan. 30</div>
<div style="position:absolute;left:363px;top:487.25px;height:17.5px;line-height:17.5px;font-size:13.5px;color:#000;white-space:nowrap;">Purchase</div>
<div style="position:absolute;left:429px;top:487px;width:62px;height:18px;line-height:18px;font-size:13.5px;text-align:right;white-space:nowrap">180</div>
<div style="position:absolute;left:493px;top:487px;width:85px;height:18px;line-height:18px;font-size:13.5px;text-align:right;white-space:nowrap">4.5</div>
<div style="position:absolute;left:580px;top:487px;width:66px;height:18px;line-height:18px;font-size:13.5px;text-align:right;white-space:nowrap">810</div>
<div style="position:absolute;left:840px;top:487px;width:62px;height:18px;line-height:18px;font-size:13.5px;text-align:right;white-space:nowrap">200</div>
<div style="position:absolute;left:904px;top:487px;width:62px;height:18px;line-height:18px;font-size:13.5px;text-align:right;white-space:nowrap">4.59</div>
<div style="position:absolute;left:968px;top:487px;width:62px;height:18px;line-height:18px;font-size:13.5px;text-align:right;white-space:nowrap">918</div>
<div style="position:absolute;left:648px;top:507px;width:62px;height:18px;line-height:18px;font-size:13.5px;text-align:right;white-space:nowrap">180</div>
<div style="position:absolute;left:776px;top:507px;width:62px;height:18px;line-height:18px;font-size:13.5px;text-align:right;white-space:nowrap">1032</div>
<div style="position:absolute;left:840px;top:507px;width:62px;height:18px;line-height:18px;font-size:13.5px;text-align:right;white-space:nowrap">200</div>
<div style="position:absolute;left:904px;top:507px;width:62px;height:18px;line-height:18px;font-size:13.5px;text-align:right;white-space:nowrap">4.59</div>
<div style="position:absolute;left:968px;top:507px;width:62px;height:18px;line-height:18px;font-size:13.5px;text-align:right;white-space:nowrap">918</div>
<div style="position:absolute;left:432px;top:527.25px;height:17.5px;line-height:17.5px;font-size:13.5px;color:#000;white-space:nowrap;">Weighted average cost per unit on January 20 = $540/100 units = $5.40</div>
<div style="position:absolute;left:432px;top:547.25px;height:17.5px;line-height:17.5px;font-size:13.5px;color:#000;white-space:nowrap;">Weighted average cost per unit on January 30 = $918/200 units = $4.59</div>
<div style="position:absolute;left:429px;top:384px;width:604px;height:1px;background:#000"></div>
<div style="position:absolute;left:429px;top:404px;width:604px;height:1px;background:#000"></div>
<div style="position:absolute;left:429px;top:504px;width:604px;height:1px;background:#000"></div>
<div style="position:absolute;left:429px;top:524px;width:604px;height:1px;background:#000"></div>
<div style="position:absolute;left:429px;top:384px;width:1px;height:141px;background:#000"></div>
<div style="position:absolute;left:648px;top:384px;width:1px;height:141px;background:#000"></div>
<div style="position:absolute;left:840px;top:384px;width:1px;height:141px;background:#000"></div>
<div style="position:absolute;left:1032px;top:384px;width:1px;height:141px;background:#000"></div>
<svg style="position:absolute;left:841px;top:445px;" width="7" height="7" viewBox="0 0 7 7"><path d="M0 0 H6.6 L0 6.6 Z" fill="#1e7a3a"/></svg>
<svg style="position:absolute;left:905px;top:445px;" width="7" height="7" viewBox="0 0 7 7"><path d="M0 0 H6.6 L0 6.6 Z" fill="#1e7a3a"/></svg>
<svg style="position:absolute;left:969px;top:445px;" width="7" height="7" viewBox="0 0 7 7"><path d="M0 0 H6.6 L0 6.6 Z" fill="#1e7a3a"/></svg>
<svg style="position:absolute;left:969px;top:485px;" width="7" height="7" viewBox="0 0 7 7"><path d="M0 0 H6.6 L0 6.6 Z" fill="#1e7a3a"/></svg>
<div style="position:absolute;left:903px;top:564px;width:66px;height:22px;border:2px solid #217346"></div>
<div style="position:absolute;left:966px;top:582px;width:6px;height:6px;background:#217346;border:1px solid #fff"></div>
<div style="position:absolute;left:271px;top:166px;width:1px;height:602px;background:#e3f4ec"></div>
<div style="position:absolute;left:1166px;top:166px;width:1px;height:602px;background:#e3f4ec"></div>
<div style="position:absolute;left:271px;top:728px;width:896px;height:40px;background:#fff"></div>
<div style="position:absolute;left:360px;top:728px;width:1px;height:13px;background:#d4d4d4"></div>
<div style="position:absolute;left:429px;top:728px;width:1px;height:13px;background:#d4d4d4"></div>
<div style="position:absolute;left:493px;top:728px;width:1px;height:13px;background:#d4d4d4"></div>
<div style="position:absolute;left:580px;top:728px;width:1px;height:13px;background:#d4d4d4"></div>
<div style="position:absolute;left:648px;top:728px;width:1px;height:13px;background:#d4d4d4"></div>
<div style="position:absolute;left:712px;top:728px;width:1px;height:13px;background:#d4d4d4"></div>
<div style="position:absolute;left:776px;top:728px;width:1px;height:13px;background:#d4d4d4"></div>
<div style="position:absolute;left:840px;top:728px;width:1px;height:13px;background:#d4d4d4"></div>
<div style="position:absolute;left:904px;top:728px;width:1px;height:13px;background:#d4d4d4"></div>
<div style="position:absolute;left:968px;top:728px;width:1px;height:13px;background:#d4d4d4"></div>
<div style="position:absolute;left:1032px;top:728px;width:1px;height:13px;background:#d4d4d4"></div>
<div style="position:absolute;left:1096px;top:728px;width:1px;height:13px;background:#d4d4d4"></div>
<div style="position:absolute;left:296px;top:741px;width:850px;height:1px;background:#d4d4d4"></div>
<div style="position:absolute;left:271px;top:741px;width:896px;height:27px;background:#e6e6e6"></div>
<div style="position:absolute;left:370px;top:742px;width:66px;height:22px;background:#fff;border-bottom:2px solid #217346"></div>
<div style="position:absolute;left:380px;top:743.0px;height:18px;line-height:18px;font-size:14px;color:#217346;white-space:nowrap;font-weight:bold">Sheet1</div>
<div style="position:absolute;left:826px;top:750px;width:15px;height:16px;background:#c6c6c6"></div>
<div style="position:absolute;left:841px;top:751px;width:265px;height:14px;background:#c6c6c6"></div>
<div style="position:absolute;left:1130px;top:750px;width:15px;height:16px;background:#c6c6c6"></div>
<div style="position:absolute;left:1149px;top:728px;width:15px;height:14px;background:#fff;border:1px solid #c6c6c6"></div>
<div style="position:absolute;left:1073px;top:649.0px;height:26px;line-height:26px;font-size:20px;color:rgba(150,150,150,0.55);white-space:nowrap;transform:scaleX(0.9947);transform-origin:0 50%;">Activate Windows</div>
<div style="position:absolute;left:1073px;top:674.0px;height:20px;line-height:20px;font-size:15px;color:rgba(150,150,150,0.55);white-space:nowrap;transform:scaleX(0.9967);transform-origin:0 50%;">Go to Settings to activate Windows.</div>
<div style="position:absolute;left:0px;top:728px;width:1366px;height:40px;background:rgba(8,8,8,0.87)"></div>
<div style="position:absolute;left:0px;top:728px;width:270px;height:40px;background:#050505"></div>
<div style="position:absolute;left:1168px;top:728px;width:198px;height:40px;background:#0b0b0b"></div>
<div style="position:absolute;left:0px;top:728px;width:48px;height:40px;background:#000"></div>
<svg style="position:absolute;left:16px;top:740px;" width="17" height="16" viewBox="0 0 17 16"><path d="M0 2.2 L7 1.2 V7.5 H0 Z M8 1.05 L16.5 0 V7.5 H8 Z M0 8.5 H7 V14.8 L0 13.8 Z M8 8.5 H16.5 V16 L8 14.95 Z" fill="#fff"/></svg>
<div style="position:absolute;left:48px;top:728px;width:344px;height:40px;background:#333"></div>
<div style="position:absolute;left:60px;top:739.0px;height:19px;line-height:19px;font-size:15px;color:#a3a3a3;white-space:nowrap;transform:scaleX(0.9811);transform-origin:0 50%;">Search the web and Windows</div>
<svg style="position:absolute;left:405px;top:740px;" width="22" height="16" viewBox="0 0 22 16"><rect x="4.5" y="1" width="12.5" height="14" fill="none" stroke="#fff" stroke-width="1.3"/><path d="M3 3 H1.2 V13 H3 M18.5 3 H20.3 V13 H18.5" fill="none" stroke="#fff" stroke-width="1.2"/></svg>
<svg style="position:absolute;left:455px;top:736px;" width="24" height="24" viewBox="0 0 24 24"><path d="M3.5 13 H19.5 Q20.5 3.5 12 3.5 Q4 3.5 3 12.5 Q3 20.5 12 20.5 Q16 20.5 19 18.5 V15 Q16 17 12.5 17 Q8 17 7.7 13 Z M8 10 Q8.5 7 12 7 Q15.5 7 15.5 10 Z" fill="#1979d6"/></svg>
<svg style="position:absolute;left:503px;top:737px;" width="23" height="20" viewBox="0 0 23 20"><path d="M1 2 H8 L10 4 H22 V19 H1 Z" fill="#f4c74d"/><path d="M1 6 H22 V19 H1 Z" fill="#fde27c"/><path d="M5 19 V12 H18 V19 H14.5 V15 H8.5 V19 Z" fill="#2aa6e8"/></svg>
<svg style="position:absolute;left:551px;top:736px;" width="24" height="24" viewBox="0 0 24 24"><path d="M2 7 H22 V23 H2 Z" fill="#fff"/><path d="M7 7 V5 Q7 1 12 1 Q17 1 17 5 V7" fill="none" stroke="#fff" stroke-width="1.8"/><path d="M7 11 H11.3 V14.7 H7 Z M12.7 11 H17 V14.7 H12.7 Z M7 16 H11.3 V19.7 H7 Z M12.7 16 H17 V19.7 H12.7 Z" fill="#222"/></svg>
<div style="position:absolute;left:589px;top:728px;width:48px;height:40px;background:rgba(255,255,255,0.16)"></div>
<svg style="position:absolute;left:600px;top:737px;" width="26" height="22" viewBox="0 0 26 22"><rect x="6" y="0" width="20" height="22" rx="1.5" fill="#21a366"/><rect x="16" y="0" width="10" height="11" fill="#33c481"/><rect x="6" y="11" width="20" height="11" fill="#107c41"/><rect x="0" y="4" width="13" height="14" rx="1.5" fill="#185c37"/><path d="M3.5 7 L9.5 15 M9.5 7 L3.5 15" stroke="#fff" stroke-width="1.8"/></svg>
<svg style="position:absolute;left:650px;top:736px;" width="24" height="24" viewBox="0 0 24 24"><circle cx="12" cy="12" r="11.5" fill="#db4437"/><path d="M12 12 L2 6 A11.5 11.5 0 0 0 8 23 Z" fill="#0f9d58"/><path d="M12 12 L8 23 A11.5 11.5 0 0 0 23.5 12 L22.2 6 Z" fill="#ffcd40"/><path d="M12 12 L2 6 A11.5 11.5 0 0 1 22.2 6 Z" fill="#db4437"/><circle cx="12" cy="12" r="5.2" fill="#fff"/><circle cx="12" cy="12" r="4.1" fill="#4285f4"/></svg>
<svg style="position:absolute;left:699px;top:736px;" width="23" height="24" viewBox="0 0 23 24"><defs><linearGradient id="acr" x1="0" y1="0" x2="0" y2="1"><stop offset="0" stop-color="#d8231f"/><stop offset="1" stop-color="#8e0b0b"/></linearGradient></defs><rect x="0.5" y="0.5" width="22" height="23" rx="2" fill="url(#acr)"/><path d="M3.5 18.5 Q5 15 11 13.5 Q16 12.5 19.5 14 Q17 15.5 11 13.5 Q9 8 10.5 4.5 Q12.5 8 11 13.5 Q8 18 3.5 18.5 Z" fill="none" stroke="#fff" stroke-width="1.3" stroke-linejoin="round"/></svg>
<svg style="position:absolute;left:747px;top:737px;" width="27" height="22" viewBox="0 0 27 22"><rect x="6" y="0" width="21" height="22" rx="1.5" fill="#41a5ee"/><rect x="6" y="7" width="21" height="8" fill="#2b7cd3"/><rect x="6" y="15" width="21" height="7" fill="#185abd"/><rect x="0" y="4" width="14" height="14" rx="1.5" fill="#185abd"/><text x="7" y="15.5" font-size="10" font-weight="bold" fill="#fff" text-anchor="middle" font-family="Liberation Sans">W</text></svg>
<div style="position:absolute;left:495px;top:766px;width:40px;height:2px;background:#76b9ed"></div>
<div style="position:absolute;left:589px;top:766px;width:48px;height:2px;background:#76b9ed"></div>
<div style="position:absolute;left:642px;top:766px;width:40px;height:2px;background:#76b9ed"></div>
<div style="position:absolute;left:691px;top:766px;width:40px;height:2px;background:#76b9ed"></div>
<div style="position:absolute;left:741px;top:766px;width:39px;height:2px;background:#76b9ed"></div>
<svg style="position:absolute;left:1176px;top:744px;" width="14" height="8" viewBox="0 0 14 8"><path d="M1 7.5 L7 1.5 L13 7.5" fill="none" stroke="#fff" stroke-width="1.2"/></svg>
<svg style="position:absolute;left:1198px;top:741px;" width="19" height="15" viewBox="0 0 19 15"><path d="M3 0 V3 M6 0 V3 M2 3 H7 V6 Q7 8 4.5 8 Q2 8 2 6 Z M4.5 8 V13" fill="none" stroke="#fff" stroke-width="1.1"/><rect x="7.5" y="5" width="9" height="7" fill="none" stroke="#fff" stroke-width="1.1"/><rect x="9" y="6.5" width="6" height="4" fill="#fff"/><rect x="16.5" y="7" width="1.5" height="3" fill="#fff"/></svg>
<svg style="position:absolute;left:1226px;top:741px;" width="14" height="14" viewBox="0 0 14 14"><path d="M1 13 A12 12 0 0 1 13 1 M3.8 13 A9.2 9.2 0 0 1 13 3.8 M6.6 13 A6.4 6.4 0 0 1 13 6.6" fill="none" stroke="#fff" stroke-width="1.1"/><rect x="9.5" y="9.5" width="3.5" height="3.5" fill="#fff"/></svg>
<svg style="position:absolute;left:1247px;top:740px;" width="17" height="16" viewBox="0 0 17 16"><path d="M1 5.5 H4 L8 1.5 V14.5 L4 10.5 H1 Z" fill="none" stroke="#fff" stroke-width="1.1"/><path d="M10.5 5.5 Q12 8 10.5 10.5 M12.8 3.5 Q15.5 8 12.8 12.5 M15 1.5 Q19 8 15 14.5" fill="none" stroke="#fff" stroke-width="1.1"/></svg>
<svg style="position:absolute;left:1271px;top:740px;" width="16" height="18" viewBox="0 0 16 18"><path d="M0 0 H16 V13 H10 L8 16.5 L6 13 H0 Z" fill="#fff"/><path d="M3 3.5 H13 M3 6.5 H13 M3 9.5 H10" stroke="#111" stroke-width="1.2"/></svg>
<div style="position:absolute;left:1305px;top:731.0px;height:16px;line-height:16px;font-size:12px;color:#fff;white-space:nowrap;transform:scaleX(0.9398);transform-origin:0 50%;">3:59 PM</div>
<div style="position:absolute;left:1303px;top:748.0px;height:16px;line-height:16px;font-size:12px;color:#fff;white-space:nowrap;transform:scaleX(0.9848);transform-origin:0 50%;">3/3/2020</div>
<div style="position:absolute;left:1361px;top:728px;width:1px;height:40px;background:#666"></div>
</body></html>
